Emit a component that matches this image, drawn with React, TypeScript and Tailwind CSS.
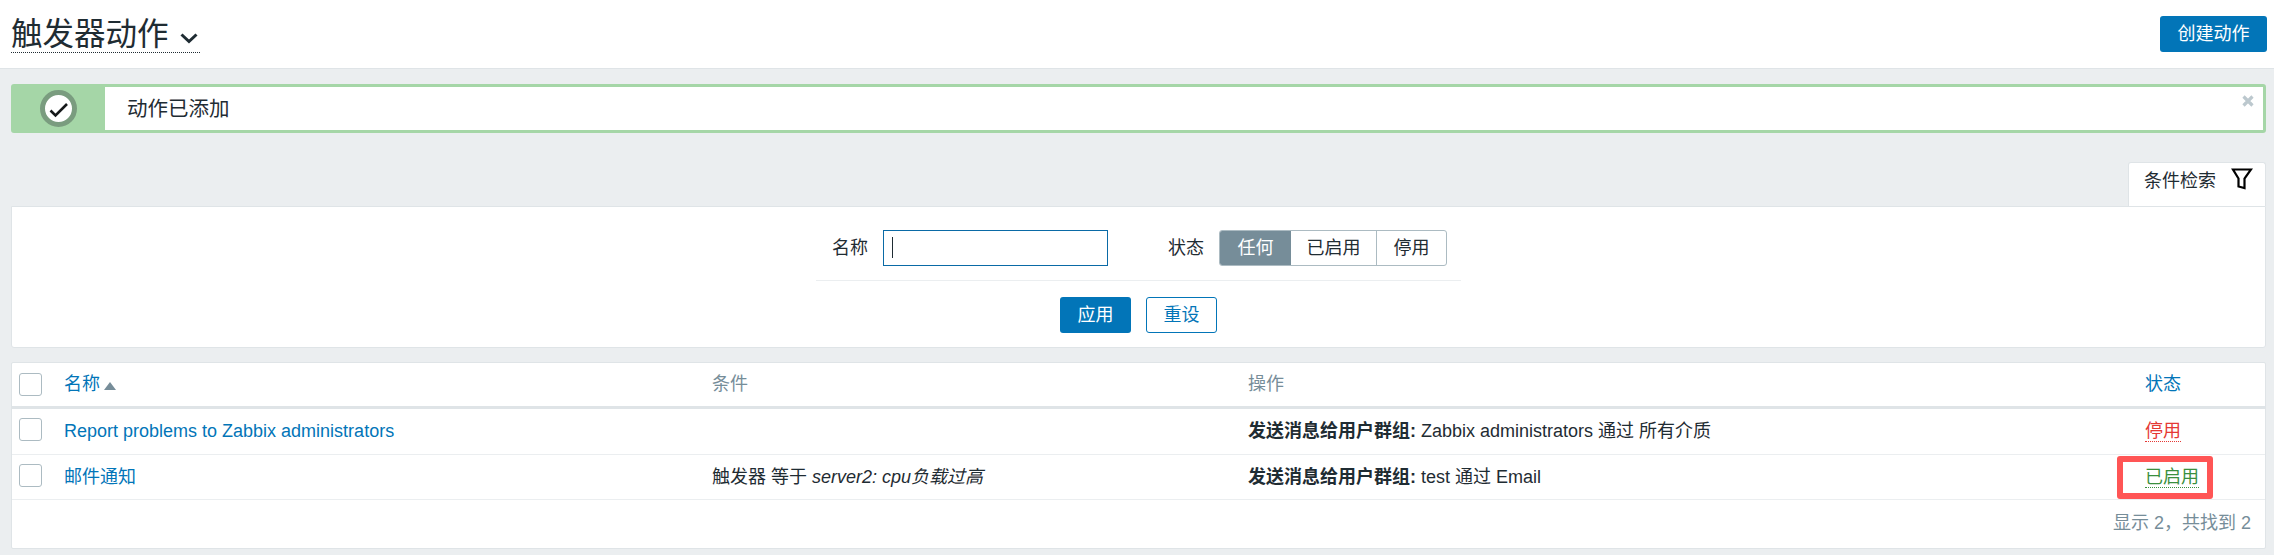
const font = "font-['Liberation_Sans','Noto_Sans_CJK_SC',sans-serif]";
const cols = "grid-cols-[52px_648px_536px_897px_1fr]";

function Checkbox() {
  return <span className="block h-[23px] w-[23px] rounded-[3px] border border-[#acbbc2] bg-white" />;
}

function SuccessIcon() {
  return (
    <svg width="37" height="37" viewBox="0 0 37 37">
      <circle cx="18.5" cy="18.5" r="16" fill="#fff" stroke="#7a9c7f" strokeWidth="5" />
      <path d="M10.500 20.500l5 5L27 14" fill="none" stroke="#16191b" strokeWidth="2.600" />
    </svg>
  );
}

function FilterIcon() {
  return (
    <svg width="22" height="22" viewBox="0 0 22 22">
      <path d="M2 1.500h18l-6.500 9v9.500l-6-1.500v-8z" fill="none" stroke="#000" strokeWidth="2.200" />
    </svg>
  );
}

export default function App() {
  return (
    <div className={`${font} h-[555px] w-[2274px] overflow-hidden bg-[#ebeef0] text-[18px] leading-[27px] text-[#1f2c33]`}>
      <header className="flex h-[69px] items-start justify-between border-b border-[#dfe4e7] bg-white pl-[11px] pr-[7px] pt-[14px]">
        <h1 className="flex h-[39px] w-[189px] items-center gap-[11px] border-b border-dotted border-[#1f2c33] pt-[2px] text-[31.500px] font-normal leading-[36px]">
          触发器动作
          <svg width="18" height="12" viewBox="0 0 18 12" className="mt-[8px]">
            <path d="M1.500 2.500l7.500 7 7.500-7" fill="none" stroke="#1f2c33" strokeWidth="3" />
          </svg>
        </h1>
        <button className="mt-[2px] h-[36px] w-[107px] rounded-[3px] bg-[#0275b8] text-[18px] text-white">创建动作</button>
      </header>

      <div className="pl-[11px] pr-[8px] pt-[15px]">
        <div className="flex h-[49px] rounded-[3px] border-[3px] border-[#a5d6a7] bg-white">
          <div className="flex w-[91px] shrink-0 items-center justify-center bg-[#a5d6a7] pr-[3px]">
            <SuccessIcon />
          </div>
          <div className="flex flex-1 items-center pl-[22px] text-[20.500px]">动作已添加</div>
          <svg width="12" height="12" viewBox="0 0 12 12" className="mr-[9px] mt-[8px]">
            <path d="M1.500 1.500l9 9M10.500 1.500l-9 9" fill="none" stroke="#bcc8ce" strokeWidth="3.200" />
          </svg>
        </div>

        <div className="mt-[29px] flex justify-end">
          <div className="flex h-[44px] w-[138px] gap-[15px] rounded-t-[3px] border border-b-0 border-[#dfe4e7] bg-white pl-[15px] pt-[5px]">
            <span>条件检索</span>
            <FilterIcon />
          </div>
        </div>

        <section className="flex h-[142px] flex-col items-center rounded-b-[3px] border border-[#dfe4e7] bg-white">
          <div className="flex w-[645px] items-start border-b border-[#ebeef0] pb-[14px] pt-[23px]">
            <label className="ml-[16px] mr-[15px] leading-[36px]">名称</label>
            <div className="h-[36px] w-[225px] border border-[#0a6aa6] pl-[8px] pt-[6px]">
              <span className="block h-[21px] w-px bg-[#1f2c33]" />
            </div>
            <label className="ml-[60px] mr-[15px] leading-[36px]">状态</label>
            <div className="flex h-[36px] w-[228px] overflow-hidden rounded-[3px] border border-[#acbbc2] leading-[34px]">
              <span className="w-[71px] bg-[#768d99] text-center text-white">任何</span>
              <span className="w-[86px] border-r border-[#acbbc2] text-center">已启用</span>
              <span className="flex-1 text-center">停用</span>
            </div>
          </div>
          <div className="mt-[16px] flex gap-[15px]">
            <button className="h-[36px] w-[71px] rounded-[3px] bg-[#0275b8] text-white">应用</button>
            <button className="h-[36px] w-[71px] rounded-[3px] border border-[#0275b8] text-[#0275b8]">重设</button>
          </div>
        </section>

        <section className="mt-[14px] h-[187px] rounded-[2px] border border-[#dfe4e7] bg-white">
          <div className={`grid h-[46px] ${cols} items-center border-b-[3px] border-[#dfe4e7]`}>
            <div className="pl-[7px]"><Checkbox /></div>
            <div className="flex items-center gap-[4px] text-[#0275b8]">
              名称
              <span className="mt-[3px] h-0 w-0 border-x-[6px] border-b-[8px] border-x-transparent border-b-[#768d99]" />
            </div>
            <div className="text-[#768d99]">条件</div>
            <div className="text-[#768d99]">操作</div>
            <div className="text-[#0275b8]">状态</div>
          </div>
          <div className={`grid h-[46px] ${cols} items-center border-b border-[#ebeef0]`}>
            <div className="self-start pl-[7px] pt-[9px]"><Checkbox /></div>
            <div className="text-[#0275b8]">Report problems to Zabbix administrators</div>
            <div />
            <div><b>发送消息给用户群组:</b> Zabbix administrators 通过 所有介质</div>
            <div><span className="border-b border-dotted border-[#e53935] text-[#e53935]">停用</span></div>
          </div>
          <div className={`grid h-[45px] ${cols} items-center border-b border-[#ebeef0]`}>
            <div className="self-start pl-[7px] pt-[9px]"><Checkbox /></div>
            <div className="text-[#0275b8]">邮件通知</div>
            <div>触发器 等于 <i>server2: cpu负载过高</i></div>
            <div><b>发送消息给用户群组:</b> test 通过 Email</div>
            <div className="relative">
              <span className="border-b border-dotted border-[#3a8f3e] text-[#3a8f3e]">已启用</span>
              <span className="absolute left-[-28px] top-[-7.500px] h-[43px] w-[96px] rounded-[3px] border-[6px] border-[#ff5555]" />
            </div>
          </div>
          <div className="pr-[14px] pt-[10px] text-right text-[#768d99]">显示 2，共找到 2</div>
        </section>
      </div>
    </div>
  );
}
